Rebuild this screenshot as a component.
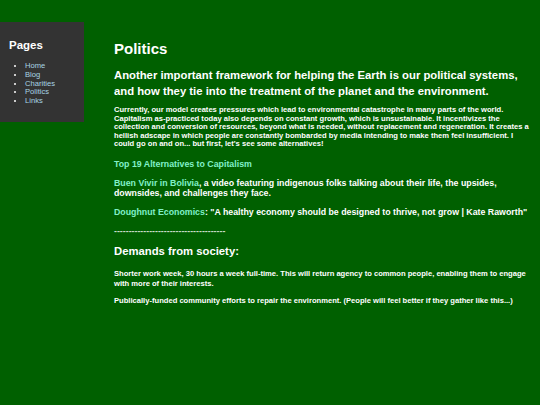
const navLinks = ["Home", "Blog", "Charities", "Politics", "Links"];

export default function App() {
  return (
    <div
      className="relative min-h-[405px] w-[540px] bg-[#006000] font-bold text-white"
      style={{ fontFamily: '"Liberation Sans", Arial, sans-serif' }}
    >
      {/* Sidebar */}
      <aside className="absolute left-0 top-[22px] h-[100px] w-[84px] bg-[#333333] pl-[9px] pt-[16px]">
        <h3 className="text-[11.5px] leading-[14px] font-bold">Pages</h3>
        <ul className="mt-[10px] list-disc pl-[16px] text-[7.6px] leading-[8.8px] font-normal">
          {navLinks.map((l) => (
            <li key={l}>
              <a className="text-[#a8d4e4]">{l}</a>
            </li>
          ))}
        </ul>
      </aside>

      {/* Main */}
      <main className="ml-[114px] pr-[10px] pt-[40px] pb-[20px]">
        <h1 className="text-[15px] leading-[18px]">Politics</h1>
        <h2 className="mt-[9px] text-[11.3px] leading-[16px]">
          Another important framework for helping the Earth is our political systems, and how they tie into the
          treatment of the planet and the environment.
        </h2>
        <p className="mt-[7px] text-[7.6px] leading-[8.6px]">
          Currently, our model creates pressures which lead to environmental catastrophe in many parts of the world.
          Capitalism as-practiced today also depends on constant growth, which is unsustainable. It incentivizes the
          collection and conversion of resources, beyond what is needed, without replacement and regeneration. It
          creates a hellish adscape in which people are constantly bombarded by media intending to make them feel
          insufficient. I could go on and on... but first, let's see some alternatives!
        </p>
        <p className="mt-[10px] text-[8.8px] leading-[10px]">
          <a className="text-[#80f0c8]">Top 19 Alternatives to Capitalism</a>
        </p>
        <p className="mt-[9px] text-[8.8px] leading-[10.2px]">
          <a className="text-[#80f0c8]">Buen Vivir in Bolivia</a>, a video featuring indigenous folks talking about
          their life, the upsides, downsides, and challenges they face.
        </p>
        <p className="mt-[9px] text-[8.8px] leading-[10px]">
          <a className="text-[#80f0c8]">Doughnut Economics</a>: "A healthy economy should be designed to thrive, not
          grow | Kate Raworth"
        </p>
        <p className="mt-[9px] text-[8.8px] leading-[10px] text-[#c8dcc8]">--------------------------------------</p>
        <h2 className="mt-[7px] text-[11.3px] leading-[16px]">Demands from society:</h2>
        <p className="mt-[10px] text-[7.6px] leading-[9.5px]">
          Shorter work week, 30 hours a week full-time. This will return agency to common people, enabling them to
          engage with more of their interests.
        </p>
        <p className="mt-[7.5px] text-[7.6px] leading-[9.5px]">
          Publically-funded community efforts to repair the environment. (People will feel better if they gather like
          this...)
        </p>
      </main>
    </div>
  );
}
